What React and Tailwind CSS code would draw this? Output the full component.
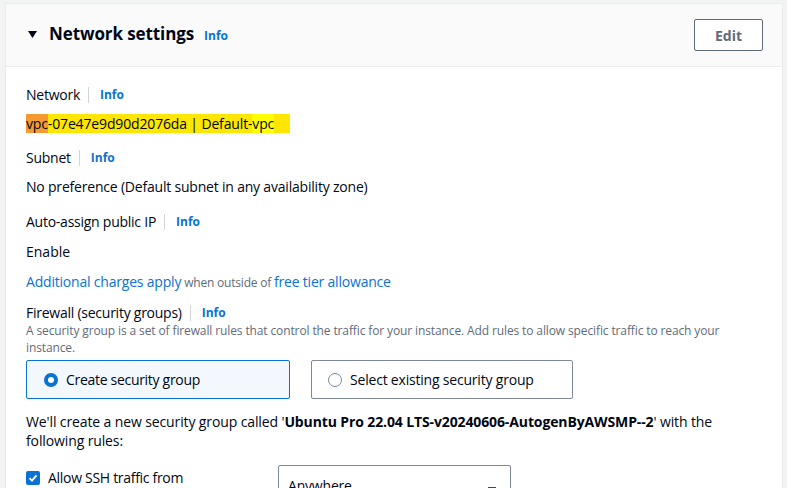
import React from 'react';

const font = { fontFamily: '"Open Sans", "Noto Sans", sans-serif' };

const Label = ({ children }) => (
  <div className="flex items-center text-[14px] leading-[20px] tracking-[-0.25px] text-[#000716]">
    <span>{children}</span>
    <span className="ml-[8px] mr-[11px] h-[16px] w-px bg-[#d1d5db]" />
    <a className="text-[12px] font-bold tracking-normal text-[#0972d3]">Info</a>
  </div>
);

const Radio = ({ checked }) =>
  checked ? (
    <span className="flex h-[14px] w-[14px] items-center justify-center rounded-full bg-[#0972d3]">
      <span className="h-[6px] w-[6px] rounded-full bg-white" />
    </span>
  ) : (
    <span className="h-[14px] w-[14px] rounded-full border-[1.5px] border-[#7d8998] bg-white" />
  );

export default function App() {
  return (
    <div className="h-[488px] w-[787px] overflow-hidden bg-[#f2f3f3] pl-[5px] pr-[4px] pt-[3px]" style={font}>
      <div className="h-full border-x border-t border-[#e9ebed] bg-white">
        {/* Header */}
        <div className="flex h-[63px] items-center justify-between border-b border-[#e9ebed] bg-[#fafafa] pl-[22px] pr-[19px]">
          <div className="flex items-center">
            <svg width="9" height="8" viewBox="0 0 9 8" className="mr-[12px]">
              <polygon points="0,0 9,0 4.5,7" fill="#000716" />
            </svg>
            <h2 className="-mt-[2px] text-[17px] font-bold tracking-[-0.1px] text-[#000716]">Network settings</h2>
            <a className="ml-[10px] mt-[1px] text-[12px] font-bold text-[#0972d3]">Info</a>
          </div>
          <button className="flex h-[32px] w-[69px] items-center justify-center rounded-[2px] border border-[#5f6b7a] bg-white text-[14px] font-bold text-[#5f6b7a]">
            Edit
          </button>
        </div>

        {/* Body */}
        <div className="pl-[20px] pr-[20px] pt-[18px] text-[#000716]">
          <Label>Network</Label>
          <div className="mt-[9px] text-[14px] leading-[20px] tracking-[-0.15px]">
            <span className="bg-[#ffe600] pr-[16px]">
              <span className="bg-[#f59a30]">vpc</span>-07e47e9d90d2076da | Default-<span className="bg-[#ffff00]">vpc</span>
            </span>
          </div>

          <div className="mt-[14px]">
            <Label>Subnet</Label>
          </div>
          <div className="mt-[9px] text-[14px] leading-[20px] tracking-[-0.2px]">No preference (Default subnet in any availability zone)</div>

          <div className="mt-[15px]">
            <Label>Auto-assign public IP</Label>
          </div>
          <div className="mt-[10px] text-[14px] leading-[20px]">Enable</div>

          <div className="mt-[10px] text-[14px] leading-[20px] tracking-[-0.2px]">
            <a className="text-[#0972d3]">Additional charges apply</a>
            <span className="text-[12px] text-[#5f6b7a]"> when outside of </span>
            <a className="text-[#0972d3]">free tier allowance</a>
          </div>

          <div className="mt-[10px]">
            <Label>Firewall (security groups)</Label>
          </div>
          <p className="-mt-[1px] max-w-[715px] text-[12px] leading-[17px] tracking-[-0.12px] text-[#5f6b7a]">
            A security group is a set of firewall rules that control the traffic for your instance. Add rules to allow specific traffic to reach your instance.
          </p>

          <div className="mt-[4px] flex gap-[21px]">
            <div className="flex h-[39px] w-[264px] items-center gap-[8px] rounded-[2px] border border-[#0972d3] bg-[#f2f8fd] pl-[17px]">
              <Radio checked />
              <span className="text-[14px] tracking-[-0.3px]">Create security group</span>
            </div>
            <div className="flex h-[39px] w-[262px] items-center gap-[8px] rounded-[2px] border border-[#7d8998] bg-white pl-[16px]">
              <Radio />
              <span className="text-[14px] tracking-[-0.2px]">Select existing security group</span>
            </div>
          </div>

          <p className="mt-[13px] max-w-[715px] text-[14px] leading-[19px] tracking-[-0.12px]">
            We'll create a new security group called '<b>Ubuntu Pro 22.04 LTS-v20240606-AutogenByAWSMP--2</b>' with the following rules:
          </p>

          <div className="mt-[7px] flex items-start">
            <div className="flex w-[252px] items-center gap-[8px] pt-[10px]">
              <span className="flex h-[14px] w-[14px] items-center justify-center rounded-[2px] bg-[#0972d3]">
                <svg width="10" height="10" viewBox="0 0 10 10">
                  <path d="M1.5 5.2 L4 7.6 L8.5 2.3" stroke="white" strokeWidth="1.8" fill="none" />
                </svg>
              </span>
              <span className="text-[14px] tracking-[-0.3px]">Allow SSH traffic from</span>
            </div>
            <div className="mt-[8px] flex h-[32px] w-[233px] items-center justify-between rounded-[2px] border border-[#7d8998] pl-[9px] pr-[13px] text-[14px] tracking-[-0.2px]">
              <span className="mt-[8px]">Anywhere</span>
              <svg width="10" height="10" viewBox="0 0 10 10" className="mt-[14px]">
                <path d="M1 5 H9" stroke="#000716" strokeWidth="1.5" />
              </svg>
            </div>
          </div>
        </div>
      </div>
    </div>
  );
}
